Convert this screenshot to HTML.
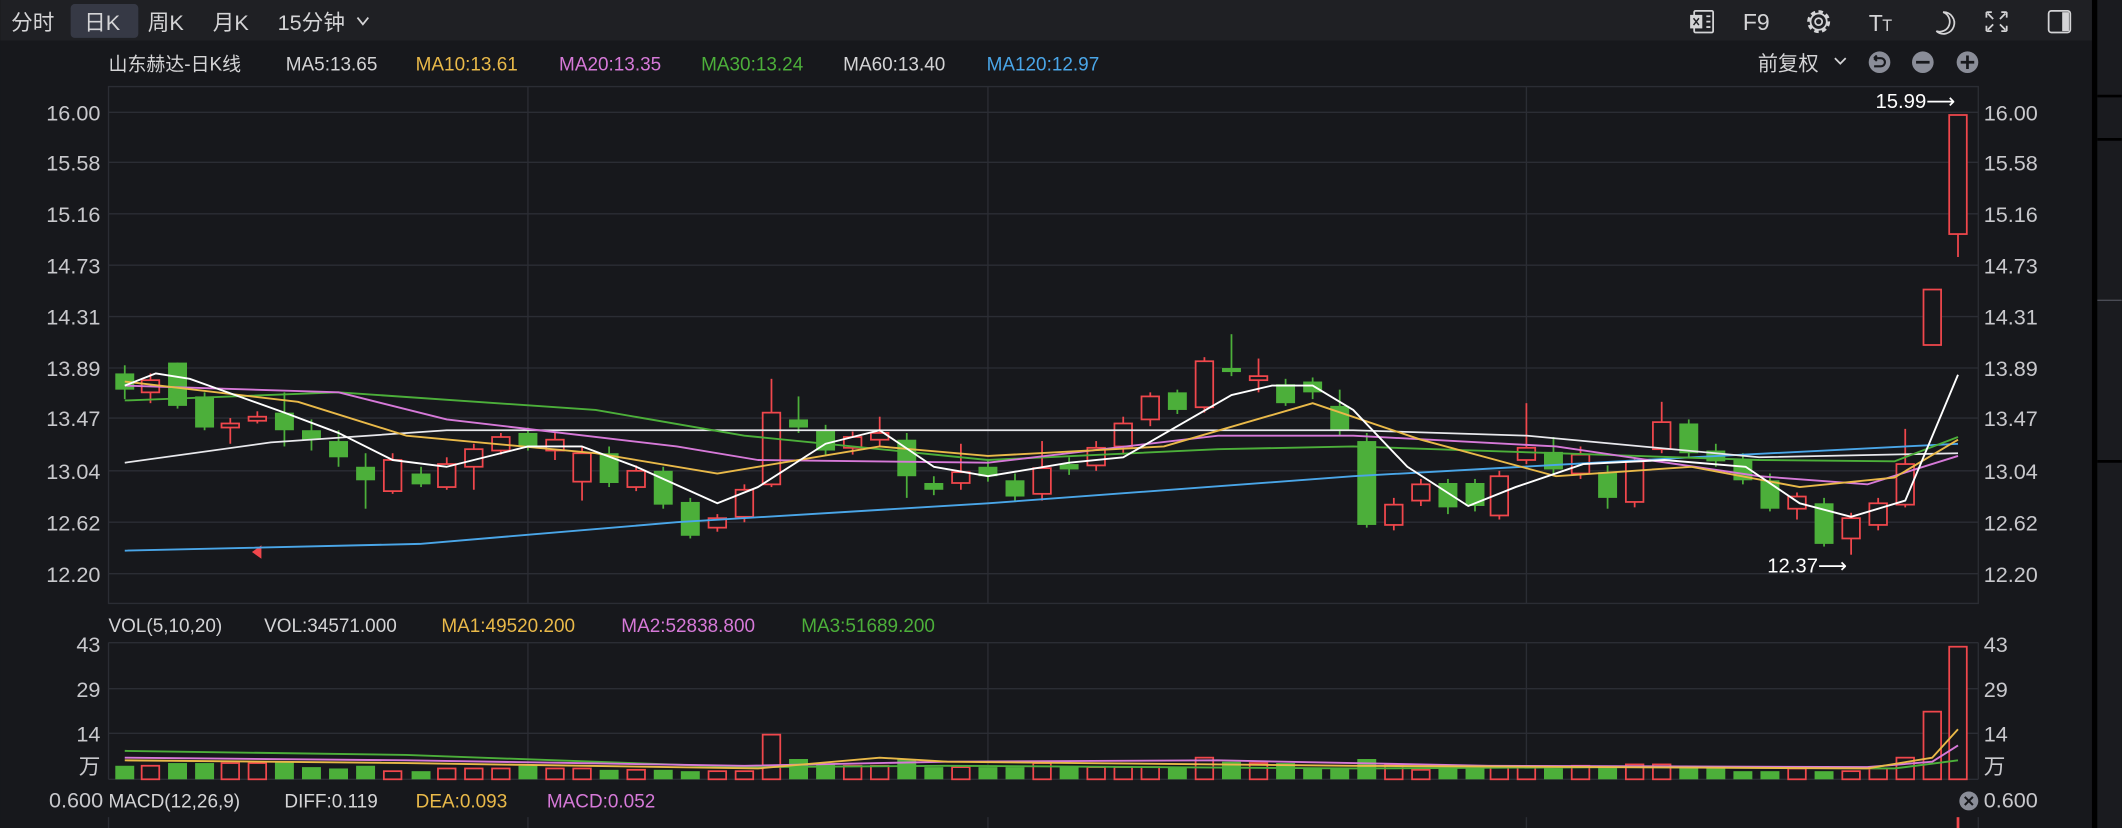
<!DOCTYPE html>
<html><head><meta charset="utf-8"><style>
html,body{margin:0;padding:0;background:#17181c;width:2122px;height:828px;overflow:hidden}
svg{display:block}
text{font-family:"Liberation Sans","Noto Sans CJK SC",sans-serif}
.ar{font-family:"DejaVu Sans",sans-serif}
</style></head><body>
<svg id="s" width="2122" height="828" viewBox="0 0 1568 612" xmlns="http://www.w3.org/2000/svg">
<rect width="1568" height="612" fill="#17181c"/>
<rect width="1548" height="30" fill="#1f2024"/>
<rect x="52" y="3" width="50" height="25" rx="3" fill="#363945"/>
<g fill="#d4d4d6" font-size="16">
<text x="8" y="22">分时</text><text x="62" y="22">日K</text><text x="109" y="22">周K</text><text x="157" y="22">月K</text><text x="205" y="22">15分钟</text>
</g>
<path d="M264 13l4 5 4-5" stroke="#d4d4d6" stroke-width="1.3" fill="none"/>
<!-- right icons -->
<g stroke="#d4d4d6" stroke-width="1.3" fill="none">
<rect x="1252" y="8" width="14" height="16" rx="1"/>
<path d="M1261 12h3M1261 16h3M1261 20h3"/>
<circle cx="1344" cy="16" r="6"/>
<circle cx="1344" cy="16" r="7.2" stroke-width="2.6" stroke-dasharray="3.2 2.4"/>
<circle cx="1344" cy="16" r="2.6"/>
<path d="M1436 9a8 8 0 1 1-5 14a7 7 0 0 0 5-14z"/>
<path d="M1468 9v4M1468 9h4M1483 9v4M1483 9h-4M1468 23v-4M1468 23h4M1483 23v-4M1483 23h-4M1469 10l4 4M1482 10l-4 4M1469 22l4-4M1482 22l-4-4"/>
<rect x="1514" y="8" width="16" height="16" rx="2"/>
</g>
<rect x="1249" y="11" width="9" height="10" fill="#d4d4d6"/>
<path d="M1251.5 13.5l4 5M1255.5 13.5l-4 5" stroke="#1f2024" stroke-width="1.1"/>
<rect x="1524" y="9" width="5" height="14" fill="#d4d4d6"/>
<text x="1288" y="22" fill="#d4d4d6" font-size="17">F9</text>
<text x="1381" y="23" fill="#d4d4d6" font-size="17">T</text><text x="1391" y="23" fill="#d4d4d6" font-size="12">T</text>
<!-- right side panel -->
<rect x="1546" y="0" width="4" height="612" fill="#000"/>
<rect x="1550" y="0" width="18" height="612" fill="#1a1b1f"/>
<path d="M1550 71h18M1550 103h18M1550 341h18" stroke="#000" stroke-width="2"/>
<path d="M1550 222h18" stroke="#4a4c55" stroke-width="1"/>
<!-- legend -->
<g font-size="14">
<text x="80" y="52" fill="#d4d4d6">山东赫达-日K线</text>
<text x="211" y="52" fill="#d4d4d6">MA5:13.65</text>
<text x="307" y="52" fill="#e9b949">MA10:13.61</text>
<text x="413" y="52" fill="#d679d8">MA20:13.35</text>
<text x="518" y="52" fill="#4caf3a">MA30:13.24</text>
<text x="623" y="52" fill="#d4d4d6">MA60:13.40</text>
<text x="729" y="52" fill="#4aa6e8">MA120:12.97</text>
<text x="1299" y="52" fill="#d4d4d6" font-size="15">前复权</text>
</g>
<path d="M1356 43l4 4 4-4" stroke="#d4d4d6" stroke-width="1.3" fill="none"/>
<circle cx="1389" cy="46" r="8" fill="#8a8d98"/><circle cx="1421" cy="46" r="8" fill="#8a8d98"/><circle cx="1454" cy="46" r="8" fill="#8a8d98"/>
<path d="M1416 46h10M1449 46h10M1454 41v10" stroke="#17181c" stroke-width="2"/>
<path d="M1385 43h5a3 3 0 0 1 0 6h-5M1385 43l2-2M1385 43l2 2" stroke="#17181c" stroke-width="1.6" fill="none"/>
<!-- grids -->
<g id="grid" stroke="#2b2d34" stroke-width="1" fill="none">
<rect x="80" y="64" width="1382" height="382"/>
<path d="M80 83H1462M80 120H1462M80 158H1462M80 196H1462M80 234H1462M80 272H1462M80 309H1462M80 348H1462M80 386H1462M80 424H1462M390 64V446M730 64V446M1128 64V446"/>
<path d="M80 475H1462M80 509H1462M80 542H1462M80 576H1462M80 475V576M1462 475V576M390 475V576M730 475V576M1128 475V576M80 604V612M390 604V612M730 604V612M1128 604V612M1462 604V612"/>
</g>
<g fill="#c8c8cc" font-size="16">
<text x="74" y="89" text-anchor="end">16.00</text><text x="74" y="126" text-anchor="end">15.58</text><text x="74" y="164" text-anchor="end">15.16</text><text x="74" y="202" text-anchor="end">14.73</text><text x="74" y="240" text-anchor="end">14.31</text><text x="74" y="278" text-anchor="end">13.89</text><text x="74" y="315" text-anchor="end">13.47</text><text x="74" y="354" text-anchor="end">13.04</text><text x="74" y="392" text-anchor="end">12.62</text><text x="74" y="430" text-anchor="end">12.20</text>
<text x="1466" y="89">16.00</text><text x="1466" y="126">15.58</text><text x="1466" y="164">15.16</text><text x="1466" y="202">14.73</text><text x="1466" y="240">14.31</text><text x="1466" y="278">13.89</text><text x="1466" y="315">13.47</text><text x="1466" y="354">13.04</text><text x="1466" y="392">12.62</text><text x="1466" y="430">12.20</text>
<text x="74" y="482" text-anchor="end">43</text><text x="74" y="515" text-anchor="end">29</text><text x="74" y="548" text-anchor="end">14</text><text x="74" y="572" text-anchor="end">万</text><text x="76" y="597" text-anchor="end">0.600</text>
<text x="1466" y="482">43</text><text x="1466" y="515">29</text><text x="1466" y="548">14</text><text x="1466" y="572">万</text><text x="1466" y="597">0.600</text>
</g>
<text x="1386" y="80" fill="#fff" font-size="15">15.99<tspan class="ar">⟶</tspan></text>
<text x="1306" y="423" fill="#fff" font-size="15">12.37<tspan class="ar">⟶</tspan></text>
<path d="M186 408l7-5v10z" fill="#f0474c"/>
<g font-size="14">
<text x="80" y="467" fill="#d4d4d6">VOL(5,10,20)</text><text x="195" y="467" fill="#d4d4d6">VOL:34571.000</text>
<text x="326" y="467" fill="#e9b949">MA1:49520.200</text><text x="459" y="467" fill="#d679d8">MA2:52838.800</text><text x="592" y="467" fill="#4caf3a">MA3:51689.200</text>
<text x="80" y="597" fill="#d4d4d6">MACD(12,26,9)</text><text x="210" y="597" fill="#d4d4d6">DIFF:0.119</text>
<text x="307" y="597" fill="#e9b949">DEA:0.093</text><text x="404" y="597" fill="#d679d8">MACD:0.052</text>
</g>
<circle cx="1455" cy="592" r="7" fill="#8a8d98"/><path d="M1452 589l6 6M1458 589l-6 6" stroke="#17181c" stroke-width="1.5"/>
<rect x="1446" y="604" width="2" height="8" fill="#f0474c"/>
<g id="c"></g>
</svg>
<script>
var R="#f0474c",G="#4caf3a",g=document.getElementById('c'),h='';
var C=[[92,276,288,270,295,0],[111,281,290,276,298,1],[131,268,300,268,302,0],[151,293,316,290,318,0],[170,313,316,309,328,1],[190,308,311,304,313,1],[210,305,318,290,330,0],[230,318,325,310,333,0],[250,326,338,318,345,0],[270,345,355,335,376,0],[290,340,363,335,365,1],[311,350,358,345,360,0],[330,343,360,338,362,1],[350,332,345,328,362,1],[370,323,333,320,336,1],[390,320,330,316,333,0],[410,325,333,320,340,1],[430,335,356,330,370,1],[450,335,357,330,360,0],[470,348,360,344,363,1],[490,348,373,345,376,0],[510,371,396,368,398,0],[530,383,390,380,393,1],[550,362,382,358,386,1],[570,305,358,280,360,1],[590,310,316,293,320,0],[610,318,333,314,336,0],[630,323,331,319,336,1],[650,320,325,308,330,1],[670,325,352,320,368,0],[690,357,362,352,366,0],[710,349,357,328,362,1],[730,345,352,340,356,0],[750,355,367,350,370,0],[770,346,365,326,370,1],[790,343,347,338,351,0],[810,331,344,326,348,1],[830,313,330,308,336,1],[850,293,310,290,315,1],[870,290,303,288,306,0],[890,267,301,264,305,1],[910,272,275,247,278,0],[930,278,281,265,290,1],[950,284,298,280,300,0],[970,282,290,279,295,0],[990,300,318,288,322,0],[1010,326,388,320,390,0],[1030,373,388,368,392,1],[1050,358,370,354,374,1],[1070,357,375,354,380,0],[1090,357,374,354,378,0],[1108,352,381,348,384,1],[1128,331,340,298,343,1],[1148,334,347,323,350,0],[1168,336,350,330,354,1],[1188,349,368,344,376,0],[1208,341,371,338,375,1],[1228,312,332,297,335,1],[1248,313,335,310,338,0],[1268,333,341,328,345,0],[1288,340,355,335,358,0],[1308,355,376,350,378,0],[1328,367,376,364,384,1],[1348,372,402,368,404,0],[1368,383,398,379,410,1],[1388,372,388,368,392,1],[1408,343,373,317,375,1],[1428,214,255,214,255,1],[1447,85,173,85,190,1]];
var V=[10,10,12,12,12,12,13,9,8,10,6,6,8,8,8,10,8,8,7,7,7,6,6,6,33,15,11,10,10,15,9,9,9,9,12,9,9,9,9,9,16,13,12,12,8,8,15,11,7,9,9,9,9,8,10,9,11,11,8,8,6,6,8,6,6,8,16,50,98];
C.forEach(function(c,i){var col=c[5]?R:G,x=c[0];
h+='<line x1="'+x+'" y1="'+c[3]+'" x2="'+x+'" y2="'+c[4]+'" stroke="'+col+'" stroke-width="1.3"/>';
if(c[5])h+='<rect x="'+(x-6.5)+'" y="'+c[1]+'" width="13" height="'+Math.max(2,c[2]-c[1])+'" fill="#17181c" stroke="'+col+'" stroke-width="1.3"/>';
else h+='<rect x="'+(x-7)+'" y="'+c[1]+'" width="14" height="'+Math.max(2,c[2]-c[1])+'" fill="'+col+'"/>';
var v=V[i],y=576-v;
if(c[5])h+='<rect x="'+(x-6.5)+'" y="'+y+'" width="13" height="'+v+'" fill="#17181c" stroke="'+col+'" stroke-width="1.3"/>';
else h+='<rect x="'+(x-7)+'" y="'+y+'" width="14" height="'+v+'" fill="'+col+'"/>';});
function L(p,c,w){h+='<polyline points="'+p+'" fill="none" stroke="'+c+'" stroke-width="'+(w||1.4)+'" stroke-linejoin="round"/>';}
L("92,407 310,402 500,386 730,372 1000,352 1250,338 1447,328","#4aa6e8");
L("92,342 200,327 330,318 500,318 730,318 1000,318 1128,322 1300,338 1447,335","#e8e8ec",1.3);
L("92,296 250,290 440,303 550,322 730,340 900,332 1000,330 1150,335 1300,340 1400,341 1447,323","#4caf3a");
L("92,285 250,290 330,310 500,330 560,340 730,342 900,322 1000,322 1150,330 1300,352 1380,358 1447,337","#d679d8");
L("92,282 220,297 300,322 440,335 530,350 650,330 730,337 860,330 970,298 1050,325 1150,352 1250,345 1330,360 1400,353 1447,325","#e9b949");
L("92,285 115,276 140,280 210,305 250,320 290,340 330,345 390,330 430,330 470,345 530,372 560,360 610,328 650,318 690,345 730,352 790,342 830,338 870,315 910,292 940,285 970,285 1000,303 1040,345 1085,374 1120,360 1170,343 1230,340 1290,345 1330,372 1368,382 1408,370 1447,277","#ffffff");
L("92,555 300,558 550,567 700,566 1000,568 1200,567 1400,568 1447,562","#4caf3a");
L("92,560 300,562 550,566 700,563 900,562 1100,566 1380,567 1428,563 1447,551","#d679d8");
L("92,562 300,564 560,568 650,560 700,563 1000,566 1380,568 1428,560 1447,539","#e9b949");
g.innerHTML=h;
</script>
</body></html>
